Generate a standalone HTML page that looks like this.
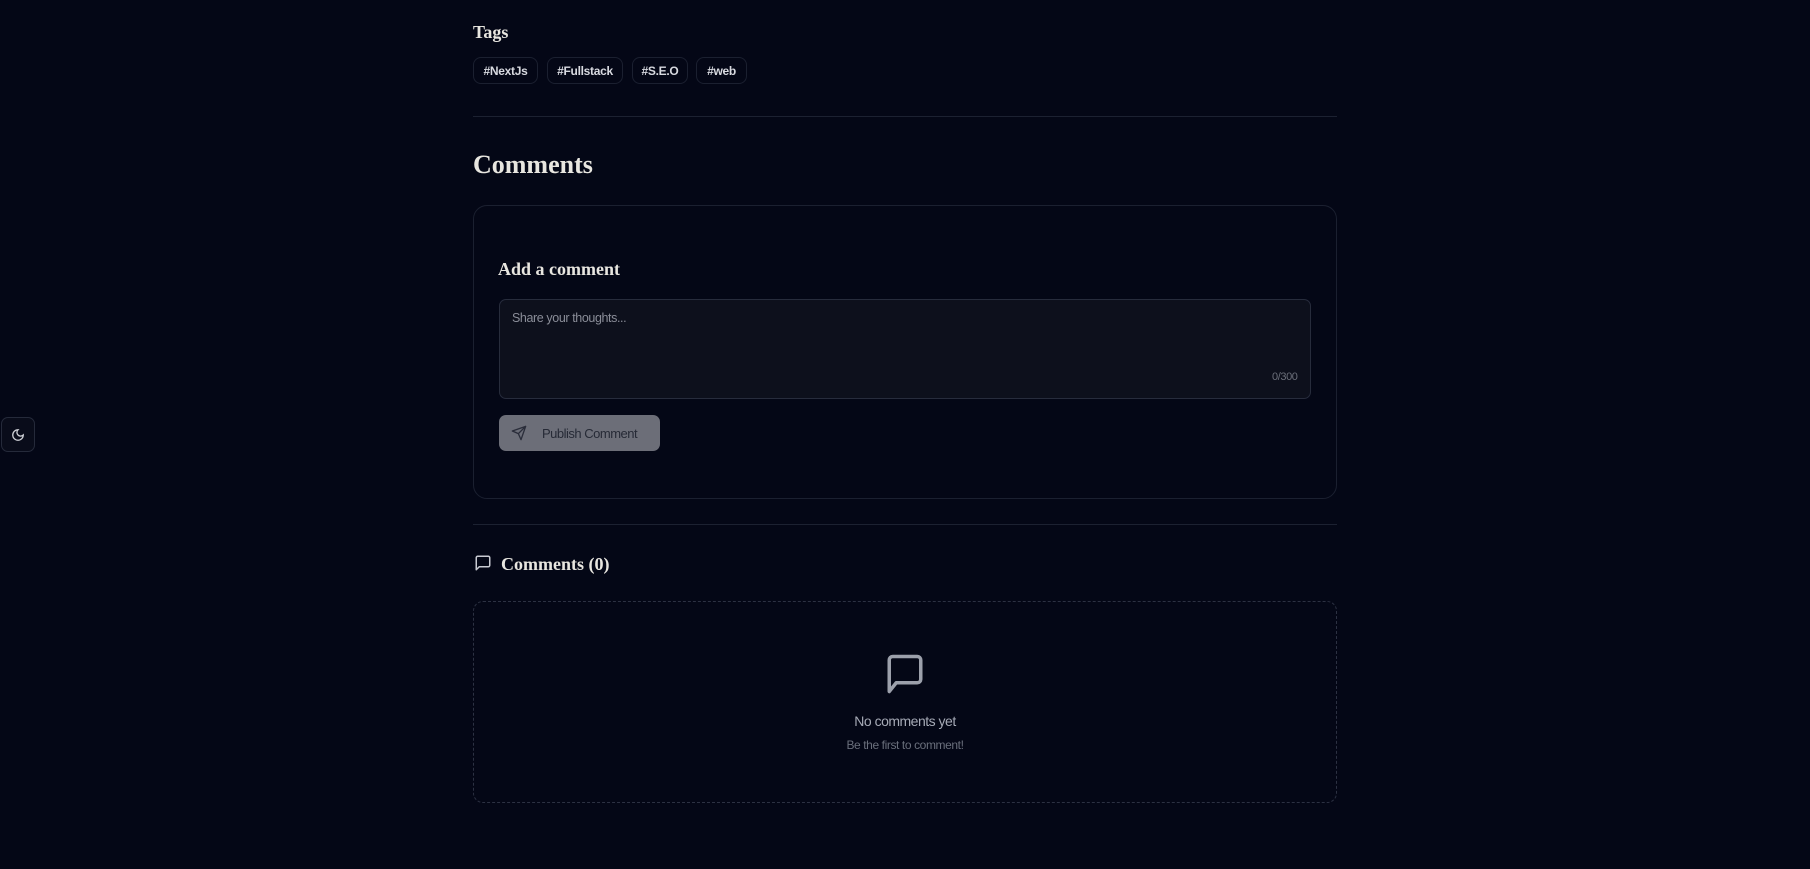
<!DOCTYPE html>
<html><head><meta charset="utf-8"><style>
*{margin:0;padding:0;box-sizing:border-box}
body{width:1810px;height:869px;background:#040716;position:relative;overflow:hidden;font-family:"Liberation Sans",sans-serif;color:#e6e6ea}
.serif{font-family:"Liberation Serif",serif;font-weight:bold;color:#e8e6e0}
.abs{position:absolute}
.chip{position:absolute;top:57px;height:27px;border:1px solid #1b2030;border-radius:8px;font-size:12px;font-weight:bold;color:#d8dae0;line-height:27px;text-align:center;letter-spacing:-0.3px}
.hr{position:absolute;left:473px;width:864px;height:1px;background:#1c2131}
</style></head><body>
<div class="abs serif" style="left:473px;top:22px;font-size:18px">Tags</div>
<div class="chip" style="left:473px;width:65px">#NextJs</div>
<div class="chip" style="left:547px;width:76px">#Fullstack</div>
<div class="chip" style="left:632px;width:56px">#S.E.O</div>
<div class="chip" style="left:696px;width:51px">#web</div>
<div class="hr" style="top:116px"></div>
<div class="abs serif" style="left:473px;top:150px;font-size:26px">Comments</div>
<div class="abs" style="left:473px;top:205px;width:864px;height:294px;border:1px solid #1b2030;border-radius:14px"></div>
<div class="abs serif" style="left:498px;top:259px;font-size:18px">Add a comment</div>
<div class="abs" style="left:499px;top:299px;width:812px;height:100px;background:#0d101c;border:1px solid #272c3c;border-radius:7px"></div>
<div class="abs" style="left:512px;top:311px;font-size:12.5px;color:#8a8d98;letter-spacing:-0.4px">Share your thoughts...</div>
<div class="abs" style="left:1272px;top:371px;font-size:11px;color:#6b6f7a;letter-spacing:-0.4px">0/300</div>
<div class="abs" style="left:499px;top:415px;width:161px;height:36px;background:#6c6e78;border-radius:7px"></div>
<svg class="abs" style="left:511px;top:425px" width="16" height="16" viewBox="0 0 24 24" fill="none" stroke="#2a2d3a" stroke-width="2" stroke-linecap="round" stroke-linejoin="round"><path d="M22 2 11 13M22 2l-7 20-4-9-9-4z"/></svg>
<div class="abs" style="left:542px;top:426px;font-size:13px;color:#262a36;letter-spacing:-0.5px">Publish Comment</div>
<div class="hr" style="top:524px"></div>
<svg class="abs" style="left:474px;top:554px" width="18" height="18" viewBox="0 0 24 24" fill="none" stroke="#c8cad2" stroke-width="2" stroke-linejoin="round"><path d="M3 21V5a2 2 0 0 1 2-2h14a2 2 0 0 1 2 2v10a2 2 0 0 1-2 2H7z"/></svg>
<div class="abs serif" style="left:501px;top:554px;font-size:18px">Comments (0)</div>
<div class="abs" style="left:473px;top:601px;width:864px;height:202px;border:1px dashed #2c3142;border-radius:10px"></div>
<svg class="abs" style="left:884px;top:652px" width="42" height="44" viewBox="0 0 24 24" fill="none" stroke="#9ca0ab" stroke-width="2" stroke-linejoin="round"><path d="M3 22V4a2 2 0 0 1 2-2h14a2 2 0 0 1 2 2v11a2 2 0 0 1-2 2H7z"/></svg>
<div class="abs" style="left:705px;width:400px;text-align:center;top:713px;font-size:14px;color:#a6aab6;letter-spacing:-0.5px">No comments yet</div>
<div class="abs" style="left:705px;width:400px;text-align:center;top:738px;font-size:12px;color:#6a6f7c;letter-spacing:-0.4px">Be the first to comment!</div>
<div class="abs" style="left:1px;top:417px;width:34px;height:35px;border:1px solid #252a3a;border-radius:7px;background:#090c1a"></div>
<svg class="abs" style="left:11px;top:428px" width="14" height="14" viewBox="0 0 24 24" fill="none" stroke="#d0d2d8" stroke-width="2.2" stroke-linecap="round"><path d="M12 3a6 6 0 0 0 9 9 9 9 0 1 1-9-9z"/></svg>
</body></html>
